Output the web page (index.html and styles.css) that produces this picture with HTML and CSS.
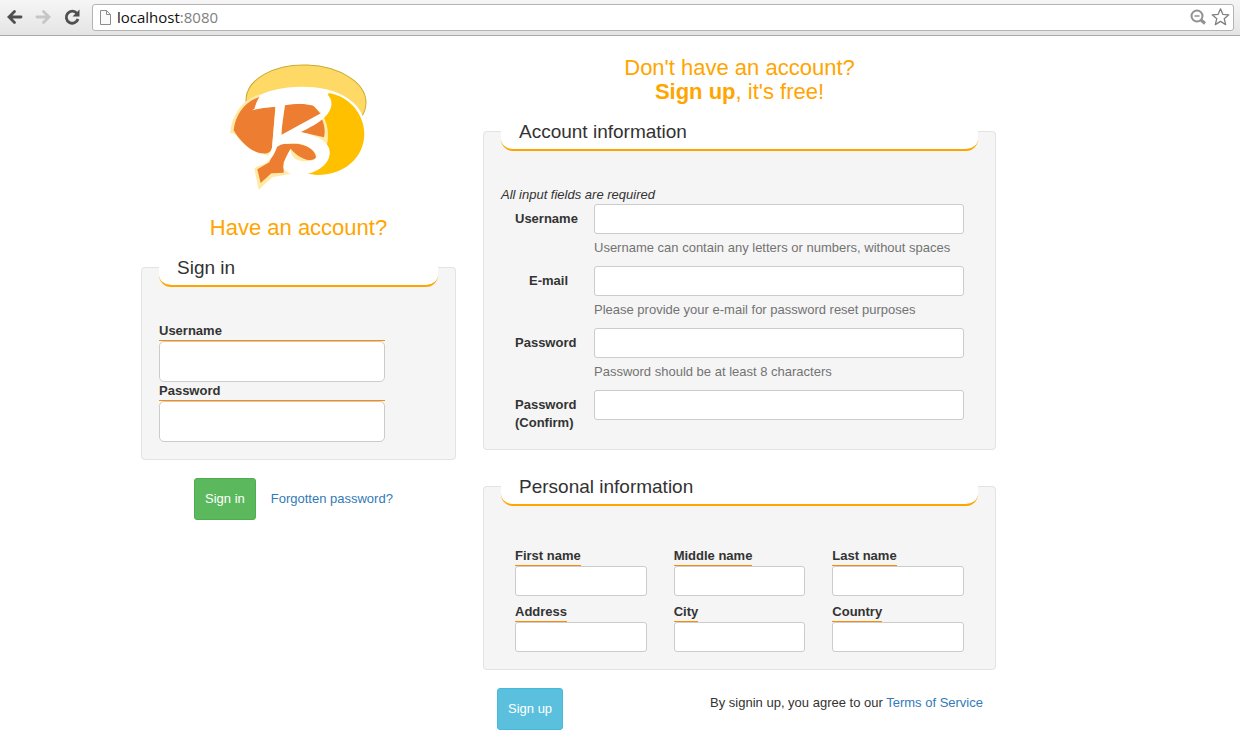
FILE: index.html
```html
<!DOCTYPE html>
<html lang="en">
<head>
<meta charset="utf-8">
<title>Sign in or sign up</title>
<link rel="stylesheet" href="styles.css">
</head>
<body>
<header class="toolbar">
  <button class="tool" type="button" aria-label="Back">
    <svg width="18" height="18" viewBox="0 0 18 18"><path d="M16 9H4M9.500 3.500L4 9l5.500 5.500" fill="none" stroke="#4f4f4f" stroke-width="2.800" stroke-linecap="round"/></svg>
  </button>
  <button class="tool" type="button" aria-label="Forward">
    <svg width="18" height="18" viewBox="0 0 18 18"><path d="M3 9h12M9.500 3.500L15 9l-5.500 5.500" fill="none" stroke="#c6c6c6" stroke-width="2.800" stroke-linecap="round"/></svg>
  </button>
  <button class="tool" type="button" aria-label="Reload">
    <svg width="18" height="18" viewBox="0 0 18 18"><path d="M14 5.500A6 6 0 1 0 15 11" fill="none" stroke="#4f4f4f" stroke-width="2.800"/><path d="M16.500 1.500v7h-7z" fill="#4f4f4f"/></svg>
  </button>
  <div class="address">
    <svg width="14" height="18" viewBox="0 0 14 18"><path d="M1.500 2.500h6l4 4v10h-10z" fill="#fafafa" stroke="#8c8c8c"/><path d="M7.500 2.500v4h4" fill="none" stroke="#8c8c8c"/></svg>
    <span class="url">localhost<span class="port">:8080</span></span>
    <svg width="18" height="18" viewBox="0 0 18 18"><circle cx="9" cy="8" r="5.500" fill="none" stroke="#8f9290" stroke-width="2"/><path d="M6.500 8h5" stroke="#8f9290" stroke-width="1.500"/><path d="M13 12l4 3.500" stroke="#8f9290" stroke-width="3"/></svg>
    <svg width="20" height="20" viewBox="0 0 20 20"><path d="M10.500 1.800l2.300 5.500 6 .5-4.600 3.900 1.500 5.900-5.200-3.200-5.200 3.200 1.500-5.900-4.600-3.900 6-.5z" fill="#fff" stroke="#808080" stroke-width="1.300" stroke-linejoin="round"/></svg>
  </div>
</header>
<main class="page">
  <form class="signin">
    <svg class="logo" width="160" height="140" viewBox="-4 0 480 420" role="img" aria-label="Logo">
      <ellipse cx="257" cy="139" rx="180" ry="109" transform="rotate(2 257 139)" fill="#ffd966" stroke="#cba92b" stroke-width="3"/>
      <path d="M40 215C50 140 132 95 245 95C345 95 412 134 430 190Q437 210 437 237C437 310 370 365 285 364L160 364L110 404L98 340L155 292C105 304 60 275 34 235Z" fill="#fff"/>
      <path d="M325 114C388 124 432 178 432 237C431 308 373 360 290 360L245 354L318 280C325 240 322 210 305 184Z" fill="#ffc000"/>
      <path d="M29 235C35 173 71 131 120 118L104 161L280 147L305 176C324 208 327 240 318 275L290 318L240 351L156 367L115 404L102 341L150 302C103 298 75 274 40 235Z" fill="#ffeaa6"/>
      <path d="M40 226C45 179 73 139 118 126L102 160L165 155L155 278C151 293 140 297 125 295C90 291 60 259 40 226Z" fill="#ed7d31"/>
      <path d="M188 149C220 143 260 146 280 153L304 180L184 243ZM300 185C314 205 315 232 311 247L241 231Z" fill="#ed7d31"/>
      <path d="M170 267L210 267C255 263 285 285 287 307C280 322 240 317 211 281L190 322V353L153 355L121 384L111 343L147 322Z" fill="#ed7d31"/>
      <path d="M103 161Q109 137 117 127Q190 88 272 104Q338 108 333 152C326 188 284 210 240 232C299 242 336 267 327 303C318 350 230 379 192 345Q181 331 211 281C211 314 238 323 274 317C306 309 279 272 230 265C198 263 179 268 170 276C159 307 145 326 111 334L106 328C131 318 151 300 155 278L166 155Q130 157 95 166ZM194 151L181 241L303 174L278 151Q240 142 194 151Z" fill="#fff" fill-rule="evenodd"/>
    </svg>
    <h1 class="lead">Have an account?</h1>
    <fieldset class="panel">
      <legend>Sign in</legend>
      <div class="login">
        <label for="login-user">Username</label>
        <input id="login-user" type="text">
        <label for="login-pass">Password</label>
        <input id="login-pass" type="password">
      </div>
    </fieldset>
    <div class="actions">
      <button class="btn btn-green" type="submit">Sign in</button>
      <a href="#">Forgotten password?</a>
    </div>
  </form>
  <form class="signup">
    <h1 class="lead">Don't have an account?<br><strong>Sign up</strong>, it's free!</h1>
    <fieldset class="panel">
      <legend>Account information</legend>
      <p class="note">All input fields are required</p>
      <div class="rows">
        <label for="user">Username</label>
        <div><input id="user" type="text" aria-describedby="user-help"><p id="user-help" class="help">Username can contain any letters or numbers, without spaces</p></div>
        <label class="short" for="email">E-mail</label>
        <div><input id="email" type="email" aria-describedby="email-help"><p id="email-help" class="help">Please provide your e-mail for password reset purposes</p></div>
        <label for="pass">Password</label>
        <div><input id="pass" type="password" aria-describedby="pass-help"><p id="pass-help" class="help">Password should be at least 8 characters</p></div>
        <label for="confirm">Password (Confirm)</label>
        <div><input id="confirm" type="password"></div>
      </div>
    </fieldset>
    <fieldset class="panel personal">
      <legend>Personal information</legend>
      <div class="cells">
        <div><label for="first">First name</label><input id="first" type="text"></div>
        <div><label for="middle">Middle name</label><input id="middle" type="text"></div>
        <div><label for="last">Last name</label><input id="last" type="text"></div>
        <div><label for="address">Address</label><input id="address" type="text"></div>
        <div><label for="city">City</label><input id="city" type="text"></div>
        <div><label for="country">Country</label><input id="country" type="text"></div>
      </div>
    </fieldset>
    <div class="finish">
      <button class="btn btn-blue" type="submit">Sign up</button>
      <p class="terms">By signin up, you agree to our <a href="#">Terms of Service</a></p>
    </div>
  </form>
</main>
</body>
</html>
```
FILE: styles.css
```css
* { box-sizing: border-box; }
body {
  margin: 0;
  background: #fff;
  color: #333;
  font: 13px/18px "Liberation Sans", Arial, sans-serif;
}
p, h1 { margin: 0; }
a { color: #337ab7; text-decoration: none; }

.toolbar {
  display: flex;
  align-items: center;
  gap: 11px;
  height: 36px;
  padding: 0 6px 1px 5px;
  background: linear-gradient(#f6f6f6, #e4e4e4);
  border-bottom: 1px solid #a9a9a9;
}
.tool { display: flex; padding: 0; border: 0; background: none; }
.address {
  display: flex;
  align-items: center;
  gap: 4px;
  flex: 1;
  height: 27px;
  padding: 0 3px 0 6px;
  background: #fff;
  border: 1px solid #b4b4b4;
  border-radius: 3px;
}
.url { flex: 1; color: #111; font: 15px/20px "Open Sans", sans-serif; }
.port { color: #808080; }

.page {
  display: grid;
  grid-template-columns: 315fr 513fr;
  gap: 27px;
  align-items: start;
  padding: 19px 244px 8px 141px;
}
.signup { padding-top: 1px; }
.logo { display: block; margin: 0 auto 21px; }
.lead {
  color: #ffa500;
  font-size: 22px;
  font-weight: 400;
  line-height: 24px;
  text-align: center;
}
.panel {
  min-width: 0;
  margin: 7px 0 0;
  padding: 0 17px 17px;
  background: #f5f5f5;
  border: 1px solid #e3e3e3;
  border-radius: 4px;
}
.panel legend {
  width: 100%;
  margin-bottom: 35px;
  padding: 4px 18px 0;
  background: #fff;
  border-bottom: 2px solid #ffa500;
  border-radius: 0 0 12px 12px;
  font-size: 19px;
  line-height: 34px;
}
.panel label { font-weight: 700; }
.panel input {
  display: block;
  width: 100%;
  height: 30px;
  padding: 4px 10px;
  background: #fff;
  border: 1px solid #ccc;
  border-radius: 3px;
  font: inherit;
}
.login { width: 81%; }
.login label { display: block; border-bottom: 1px solid #ff8c00; }
.panel .login input { height: 41px; border-radius: 5px; }

.actions {
  display: flex;
  align-items: center;
  gap: 15px;
  padding: 18px 0 0 53px;
}
.btn {
  height: 42px;
  padding: 0 10px;
  border: 1px solid;
  border-radius: 3px;
  color: #fff;
  font: 13px/18px "Liberation Sans", Arial, sans-serif;
}
.btn-green { background: #5cb85c; border-color: #4cae4c; }
.btn-blue { background: #5bc0de; border-color: #46b8da; }

.note { font-style: italic; }
.rows {
  display: grid;
  grid-template-columns: 65px 1fr;
  column-gap: 14px;
  row-gap: 9px;
  padding: 0 14px;
}
.rows label { padding-top: 6px; }
.rows .short { padding-left: 14px; }
.help { margin-top: 5px; color: #737373; }
.signup .personal { margin-top: 16px; }
.signup .personal legend { margin-bottom: 41px; }
.cells {
  display: grid;
  grid-template-columns: repeat(3, 1fr);
  gap: 7px 27px;
  padding: 0 14px;
}
.cells label {
  display: block;
  width: fit-content;
  border-bottom: 1px solid #ff8c00;
}
.finish {
  display: flex;
  justify-content: space-between;
  padding: 18px 13px 0 14px;
}
.terms { padding-top: 6px; }
```
